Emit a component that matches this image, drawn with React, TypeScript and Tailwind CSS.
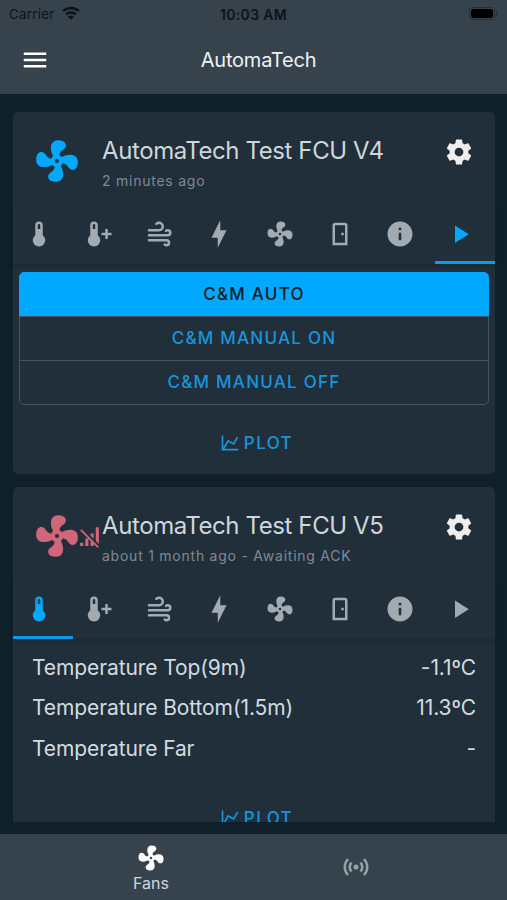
import { ReactNode, useState } from "react";

const paths = {
  fan: "M12,11A1,1 0 0,0 11,12A1,1 0 0,0 12,13A1,1 0 0,0 13,12A1,1 0 0,0 12,11M12.5,2C17,2 17.11,5.57 14.75,6.75C13.76,7.24 13.32,8.29 13.13,9.22C13.61,9.42 14.03,9.73 14.35,10.13C18.05,8.13 22.03,8.92 22.03,12.5C22.03,17 18.46,17.1 17.28,14.73C16.78,13.74 15.72,13.3 14.79,13.11C14.59,13.59 14.28,14 13.88,14.34C15.87,18.03 15.08,22 11.5,22C7,22 6.91,18.42 9.27,17.24C10.25,16.75 10.69,15.71 10.89,14.79C10.4,14.59 9.97,14.27 9.65,13.87C5.96,15.85 2,15.07 2,11.5C2,7 5.56,6.89 6.74,9.26C7.24,10.25 8.29,10.68 9.22,10.87C9.41,10.39 9.73,9.97 10.14,9.65C8.15,5.96 8.94,2 12.5,2Z",
  thermometer:
    "M15 13V5A3 3 0 0 0 9 5V13A5 5 0 1 0 15 13M12 4A1 1 0 0 1 13 5V8H11V5A1 1 0 0 1 12 4Z",
  thermometerPlus:
    "M11 13V5A3 3 0 0 0 5 5V13A5 5 0 1 0 11 13M8 4A1 1 0 0 1 9 5V8H7V5A1 1 0 0 1 8 4ZM17 8H19V11H22V13H19V16H17V13H14V11H17Z",
  wind: "M4,10A1,1 0 0,1 3,9A1,1 0 0,1 4,8H12A2,2 0 0,0 14,6A2,2 0 0,0 12,4C11.45,4 10.95,4.22 10.59,4.59C10.2,5 9.56,5 9.17,4.59C8.78,4.2 8.78,3.56 9.17,3.17C9.9,2.45 10.9,2 12,2A4,4 0 0,1 16,6A4,4 0 0,1 12,10H4M19,12A1,1 0 0,0 20,11A1,1 0 0,0 19,10C18.72,10 18.47,10.11 18.29,10.29C17.9,10.68 17.27,10.68 16.88,10.29C16.5,9.9 16.5,9.27 16.88,8.88C17.42,8.34 18.17,8 19,8A3,3 0 0,1 22,11A3,3 0 0,1 19,14H4A1,1 0 0,1 3,13A1,1 0 0,1 4,12H19M18,18H4A1,1 0 0,1 3,17A1,1 0 0,1 4,16H18A3,3 0 0,1 21,19A3,3 0 0,1 18,22C17.17,22 16.42,21.66 15.88,21.12C15.5,20.73 15.5,20.1 15.88,19.71C16.27,19.32 16.9,19.32 17.29,19.71C17.47,19.89 17.72,20 18,20A1,1 0 0,0 19,19A1,1 0 0,0 18,18Z",
  bolt: "M11 15H6L13 1V9H18L11 23V15Z",
  door: "M8,3C6.89,3 6,3.89 6,5V21H18V5C18,3.89 17.11,3 16,3H8M8,5H16V19H8V5M13,11V13H15V11H13Z",
  info: "M13,9H11V7H13M13,17H11V11H13M12,2A10,10 0 0,0 2,12A10,10 0 0,0 12,22A10,10 0 0,0 22,12A10,10 0 0,0 12,2Z",
  play: "M8,5.14V19.14L19,12.14L8,5.14Z",
  cog: "M12,15.5A3.5,3.5 0 0,1 8.5,12A3.5,3.5 0 0,1 12,8.5A3.5,3.5 0 0,1 15.5,12A3.5,3.5 0 0,1 12,15.5M19.43,12.97C19.47,12.65 19.5,12.33 19.5,12C19.5,11.67 19.47,11.34 19.43,11L21.54,9.37C21.73,9.22 21.78,8.95 21.66,8.73L19.66,5.27C19.54,5.05 19.27,4.96 19.05,5.05L16.56,6.05C16.04,5.66 15.5,5.32 14.87,5.07L14.5,2.42C14.46,2.18 14.25,2 14,2H10C9.75,2 9.54,2.18 9.5,2.42L9.13,5.07C8.5,5.32 7.96,5.66 7.44,6.05L4.95,5.05C4.73,4.96 4.46,5.05 4.34,5.27L2.34,8.73C2.21,8.95 2.27,9.22 2.46,9.37L4.57,11C4.53,11.34 4.5,11.67 4.5,12C4.5,12.33 4.53,12.65 4.57,12.97L2.46,14.63C2.27,14.78 2.21,15.05 2.34,15.27L4.34,18.73C4.46,18.95 4.73,19.03 4.95,18.95L7.44,17.94C7.96,18.34 8.5,18.68 9.13,18.93L9.5,21.58C9.54,21.82 9.75,22 10,22H14C14.25,22 14.46,21.82 14.5,21.58L14.87,18.93C15.5,18.67 16.04,18.34 16.56,17.94L19.05,18.95C19.27,19.03 19.54,18.95 19.66,18.73L21.66,15.27C21.78,15.05 21.73,14.78 21.54,14.63L19.43,12.97Z",
  chart:
    "M16,11.78L20.24,4.45L21.97,5.45L16.74,14.5L10.23,10.75L5.46,19H22V21H2V3H4V17.54L9.5,8L16,11.78Z",
  signalOff:
    "M18,3V16.18L21,19.18V3H18M4.28,5L3,6.27L10.73,14H8V21H11V14.27L13,16.27V21H16V19.27L19.73,23L21,21.72L4.28,5M13,9V11.18L16,14.18V9H13M3,18V21H6V18H3Z",
  accessPoint:
    "M4.93,4.93C3.12,6.74 2,9.24 2,12C2,14.76 3.12,17.26 4.93,19.07L6.34,17.66C4.89,16.22 4,14.22 4,12C4,9.79 4.89,7.78 6.34,6.34L4.93,4.93M19.07,4.93L17.66,6.34C19.11,7.78 20,9.79 20,12C20,14.22 19.11,16.22 17.66,17.66L19.07,19.07C20.88,17.26 22,14.76 22,12C22,9.24 20.88,6.74 19.07,4.93M7.76,7.76C6.67,8.85 6,10.35 6,12C6,13.65 6.67,15.15 7.76,16.24L9.17,14.83C8.45,14.11 8,13.11 8,12C8,10.89 8.45,9.89 9.17,9.17L7.76,7.76M16.24,7.76L14.83,9.17C15.55,9.89 16,10.89 16,12C16,13.11 15.55,14.11 14.83,14.83L16.24,16.24C17.33,15.15 18,13.65 18,12C18,10.35 17.33,8.85 16.24,7.76M12,10A2,2 0 0,0 10,12A2,2 0 0,0 12,14A2,2 0 0,0 14,12A2,2 0 0,0 12,10Z",
  menu: "M3,6H21V8H3V6M3,11H21V13H3V11M3,16H21V18H3V16Z",
};

type IconName = keyof typeof paths;

const tabs: IconName[] = [
  "thermometer",
  "thermometerPlus",
  "wind",
  "bolt",
  "fan",
  "door",
  "info",
  "play",
];

const modes = ["C&M AUTO", "C&M MANUAL ON", "C&M MANUAL OFF"];

const temperatures = [
  { label: "Temperature Top(9m)", value: "-1.1ºC" },
  { label: "Temperature Bottom(1.5m)", value: "11.3ºC" },
  { label: "Temperature Far", value: "-" },
];

const Icon = ({ name, className }: { name: IconName; className: string }) => (
  <svg viewBox="0 0 24 24" fill="currentColor" className={className}>
    <path fillRule="evenodd" d={paths[name]} />
  </svg>
);

const StatusBar = () => (
  <div className="grid h-7 grid-cols-3 items-center pl-[9px] pr-[9px] text-[13.5px] text-[#0c141a]">
    <div className="flex items-center gap-[7px]">
      <span className="tracking-[0.2px]">Carrier</span>
      <svg viewBox="0 0 18 14" className="-mt-[3px] h-[14px] w-[18px]">
        <g fill="none" stroke="currentColor" strokeWidth="2.5">
          <path d="M1 5.2a11.4 11.4 0 0 1 16 0" />
          <path d="M4 8.4a7.2 7.2 0 0 1 10 0" />
        </g>
        <path d="M9 13.8 5.9 10.7a4.4 4.4 0 0 1 6.2 0z" fill="currentColor" />
      </svg>
    </div>
    <span className="text-center text-[14px] font-semibold tracking-[0.3px] whitespace-nowrap">
      10:03 AM
    </span>
    <div className="-mt-[2px] flex items-center justify-end gap-px">
      <div className="rounded-[3px] border border-[#263139] p-px">
        <div className="h-[9px] w-[22px] rounded-[2px] bg-black" />
      </div>
      <div className="h-[5px] w-[2px] rounded-r-full bg-[#263139]" />
    </div>
  </div>
);

const PlotButton = () => (
  <button
    type="button"
    className="flex w-full items-center justify-center gap-[4px] pl-[5px] text-[17px] font-medium leading-5 tracking-[1.4px] text-[#1a95db]"
  >
    <Icon name="chart" className="size-5" />
    PLOT
  </button>
);

interface CardProps {
  title: string;
  status: string;
  offline?: boolean;
  initialTab: IconName;
  children: ReactNode;
}

const FanCard = ({ title, status, offline, initialTab, children }: CardProps) => {
  const [activeTab, setActiveTab] = useState<IconName>(initialTab);

  return (
    <section className="h-[362px] shrink-0 rounded-[5px] bg-[#202f3a]">
      <header className="flex h-[92px] pl-[19px] pr-[21px]">
        <div
          className={`flex w-[70px] shrink-0 pt-[24px] ${offline ? "text-[#d1667b]" : "text-[#00a8ff]"}`}
        >
          <Icon name="fan" className="size-[50px] shrink-0" />
          {offline && (
            <Icon name="signalOff" className="-ml-[5px] mt-[13px] size-[25px] shrink-0" />
          )}
        </div>
        <div className="flex-1 pt-[24px] whitespace-nowrap">
          <h2 className="text-[24px] leading-[30px] tracking-[-0.4px] text-[#ced6dc]">
            {title}
          </h2>
          <p className="mt-[7px] text-[14px] leading-4 tracking-[0.76px] text-[#7f8a92]">
            {status}
          </p>
        </div>
        <button type="button" className="mt-[25px] h-[30px] text-[#eeeeee]">
          <Icon name="cog" className="size-[30px]" />
        </button>
      </header>

      <nav className="grid h-[60px] grid-cols-8 shadow-[0_2px_3px_rgba(15,32,43,0.35)]">
        {tabs.map((tab) => (
          <button
            key={tab}
            type="button"
            onClick={() => setActiveTab(tab)}
            className={`flex items-center justify-center border-b-[3px] pt-[3px] pr-[9px] ${
              tab === activeTab
                ? "border-[#0b9ce8] text-[#00a8ff]"
                : "border-transparent text-[#a3abb2]"
            }`}
          >
            <Icon name={tab} className="size-[30px] shrink-0" />
          </button>
        ))}
      </nav>
      {children}
    </section>
  );
};

const ModeButtons = () => {
  const [mode, setMode] = useState<string>("C&M AUTO");

  return (
    <div className="mx-[6px] mt-2 h-[133px]">
      {modes.map((item) => (
        <button
          key={item}
          type="button"
          onClick={() => setMode(item)}
          className={`block h-[45px] w-full border text-[17px] font-medium tracking-[1.25px] not-first:-mt-px first:rounded-t-[5px] last:rounded-b-[5px] ${
            item === mode
              ? "border-[#00a8ff] bg-[#00a8ff] text-[#0b1c28]"
              : "border-[#46545d] text-[#1a95db]"
          }`}
        >
          {item}
        </button>
      ))}
    </div>
  );
};

export default function App() {
  return (
    <div className="flex h-[900px] w-[507px] flex-col overflow-hidden bg-[#10202a] font-[Inter,sans-serif]">
      <div className="h-[94px] shrink-0 bg-[#36434d]">
        <StatusBar />
        <div className="grid h-16 grid-cols-[1fr_auto_1fr] items-center pl-5 pr-[10px]">
          <button type="button" className="text-white">
            <Icon name="menu" className="size-[30px]" />
          </button>
          <h1 className="text-[20px] tracking-[-0.2px] text-[#eef2f5]">AutomaTech</h1>
        </div>
      </div>

      <main className="mb-3 flex min-h-0 flex-1 flex-col gap-[13px] overflow-hidden pt-[18px] pr-3 pl-[13px]">
        <FanCard title="AutomaTech Test FCU V4" status="2 minutes ago" initialTab="play">
          <ModeButtons />
          <div className="mt-[28px]">
            <PlotButton />
          </div>
        </FanCard>

        <FanCard
          title="AutomaTech Test FCU V5"
          status="about 1 month ago - Awaiting ACK"
          initialTab="thermometer"
          offline
        >
          <dl className="px-[19px] pt-2 text-[21px] tracking-[-0.1px] text-[#d3dbe0]">
            {temperatures.map(({ label, value }) => (
              <div key={label} className="flex h-[40.5px] items-center justify-between">
                <dt>{label}</dt>
                <dd>{value}</dd>
              </div>
            ))}
          </dl>
          <div className="mt-[39.5px]">
            <PlotButton />
          </div>
        </FanCard>
      </main>

      <nav className="grid h-[66px] shrink-0 grid-cols-[302px_1fr] bg-[#36434d]">
        <button
          type="button"
          className="flex flex-col items-center pt-[9px] text-[16px] leading-5 text-[#ced6dc]"
        >
          <Icon name="fan" className="size-[30px] text-white" />
          Fans
        </button>
        <button type="button" className="pl-[39px] text-[#97a1a8]">
          <Icon name="accessPoint" className="size-[30px]" />
        </button>
      </nav>
    </div>
  );
}
